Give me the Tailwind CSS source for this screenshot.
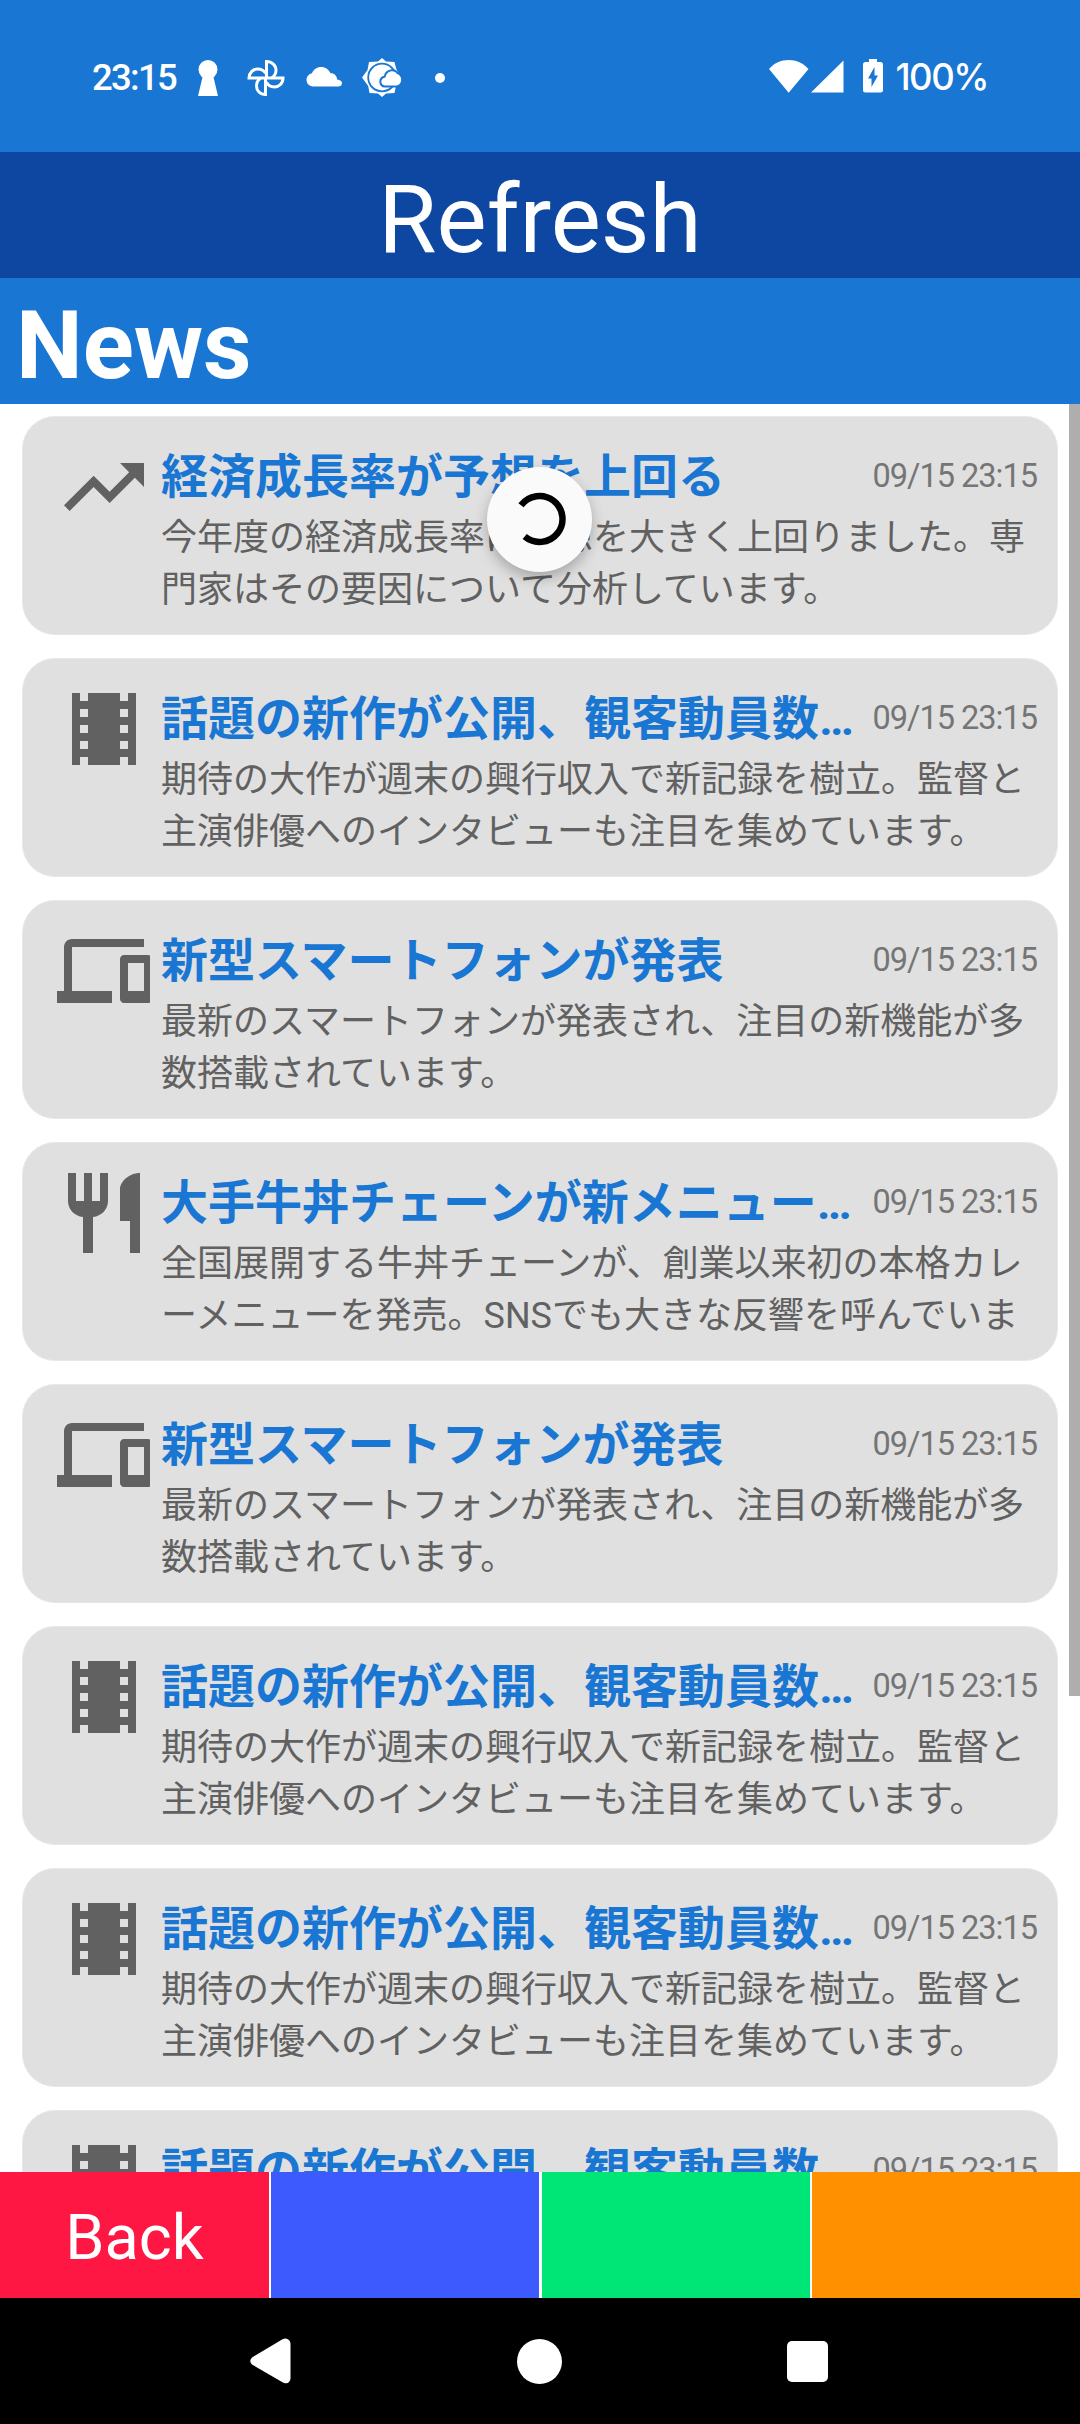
<!DOCTYPE html>
<html lang="ja">
<head>
<meta charset="utf-8">
<title>News</title>
<script src="https://cdn.jsdelivr.net/npm/@tailwindcss/browser@4"></script>
</head>
<body class="bg-white">
<div class="relative flex h-[2424px] w-[1080px] flex-col overflow-hidden font-['Roboto','Noto_Sans_CJK_JP',sans-serif]">

  <!-- Status bar -->
  <div class="flex h-[152px] shrink-0 items-start justify-between bg-[#1976d2] pt-[58px] pr-[92px] pl-[92px] text-white">
    <div class="flex h-10 items-center">
      <span class="w-[106px] text-[36.5px] leading-10 font-medium tracking-[-1.7px]">23:15</span>
      <svg class="h-10 w-5" viewBox="0 0 20 40" fill="currentColor"><circle cx="10" cy="11.500" r="9.500"/><path d="M5 17h10l5 21H0z"/></svg>
      <svg class="ml-[28px] h-10 w-10" viewBox="0 0 40 40" fill="none" stroke="currentColor" stroke-width="3"><path d="M20.500 20V3.500c5.500 0 9.500 4 9.500 8.800 0 3.500-2 6.200-4.500 7.700M20.500 20H37c0 5.500-4 9-8.500 9-4 0-7-2.500-8-5M19.500 20v16.500c-5.500 0-9-4-9-8.500 0-4 2-6.500 4.500-8M20.500 20H3c0-5 4-9 8.500-9 4 0 7 2 9 5"/></svg>
      <svg class="ml-5 h-10 w-9" viewBox="0 0 36 40" fill="currentColor"><path d="M7 28.500a6.700 6.700 0 0 1-1-13.300C7.500 11.500 11 9 15 9c4.500 0 8 2.500 9.500 6.300 3.500-.3 6.500 2.500 6.700 6.200 3 .3 4.800 1.700 4.800 3.700 0 2-1.500 3.300-4 3.300z"/></svg>
      <svg class="ml-5 h-10 w-10" viewBox="0 0 40 40" fill="currentColor"><path d="M20 0l4 3.500 8.500.5 1.500 6 4 9.500-4 8.500-1.500 7-8.500.5-4 3.500-4-3.500-8.500-.5-1.300-7L0 19.500 5.500 12 7 4l9-.5z"/><circle cx="20" cy="19.500" r="13.800" fill="none" stroke="#1976d2" stroke-width="1.800"/><path d="M23 27.500c-5 0-5-7.500.5-8 1-7 9-8 11.500-3.500 6 1.500 5.500 11.500-1.500 11.500z" stroke="#1976d2" stroke-width="4"/><path d="M23 27.500c-5 0-5-7.500.5-8 1-7 9-8 11.500-3.500 6 1.500 5.500 11.500-1.500 11.500z"/></svg>
      <span class="ml-[33px] size-2.5 rounded-full bg-white"></span>
    </div>
    <div class="flex h-10 items-center">
      <svg class="h-10 w-10" viewBox="0 0 40 40" fill="currentColor"><path d="M0 11C5 5 12 2 19.700 2S34 5 39.500 11L19.700 34.700z"/></svg>
      <svg class="ml-0.5 h-10 w-[33px]" viewBox="0 0 33 40" fill="currentColor"><path d="M32.500 2.500v32H0z"/></svg>
      <svg class="ml-[19px] h-10 w-5" viewBox="0 0 20 40"><path fill="currentColor" d="M6 1h8v3h3.500Q20 4 20 6.500v25.500q0 2.500-2.500 2.500h-15Q0 34.500 0 32V6.500Q0 4 2.500 4H6z"/><path fill="#1976d2" d="M11.500 9v8.500H15L8.500 29v-8.500H5z"/></svg>
      <span class="ml-3 -mt-0.5 text-right font-['Inter',sans-serif] text-[36.5px] leading-[36px] font-medium tracking-[-1.5px]">100%</span>
    </div>
  </div>

  <button class="flex h-[126px] shrink-0 items-center justify-center bg-[#0d47a1] pt-2.5 text-[94.5px] leading-[110px] text-white">Refresh</button>
  <h1 class="flex h-[126px] shrink-0 items-center bg-[#1976d2] pt-2.5 pl-4 text-[94.5px] leading-[110px] font-bold text-white">News</h1>

  <!-- News list -->
  <div class="relative min-h-0 flex-1 overflow-hidden bg-white">
    <ul id="list" class="flex flex-col gap-[23px] px-[22px] pt-3"></ul>
    <div class="absolute top-0 right-0 h-[1292px] w-[11px] bg-[#aeaeae]"></div>
    <div class="absolute top-[63px] left-[487px] size-[105px] rounded-full bg-[#fafafa] shadow-[0_6px_14px_rgba(0,0,0,0.26)]">
      <svg class="size-full" viewBox="-52.5 -52.5 105 105" fill="none" stroke="#000" stroke-width="6.500"><path d="M-18.500-14.200A23 23 0 1 1-14.800 17.100"/></svg>
    </div>
  </div>

  <!-- Colour buttons -->
  <div class="flex h-[126px] shrink-0 bg-white">
    <button class="flex w-[269px] items-center justify-center bg-[#ff1744] pt-1.5 text-[63px] text-white">Back</button>
    <button class="ml-0.5 w-[268px] bg-[#3d5afe]"></button>
    <button class="ml-[3px] w-[268px] bg-[#00e676]"></button>
    <button class="ml-0.5 w-[268px] bg-[#ff9100]"></button>
  </div>

  <!-- System navigation -->
  <div class="flex h-[126px] shrink-0 items-center justify-between bg-black px-[250px]">
    <svg class="h-[46px] w-[41px]" viewBox="0 0 41 46" fill="#fff"><path d="M32.500 1.300Q35 0 37.500 1 40.500 2.500 40.500 6v34q0 3.500-3 5-2.500 1-5-.7L2 26.500q-3.500-3.500 0-7z"/></svg>
    <span class="size-[45px] rounded-full bg-white"></span>
    <span class="mr-0.5 size-[41px] rounded-[5px] bg-white"></span>
  </div>
</div>

<script>
const icons = {
  trend: 'M16 6l2.290 2.290-4.880 4.880-4-4L2 16.590 3.410 18l6-6 4 4 6.300-6.290L22 12V6z',
  film: 'M18 3v2h-2V3H8v2H6V3H4v18h2v-2h2v2h8v-2h2v2h2V3h-2zM8 17H6v-2h2v2zm0-4H6v-2h2v2zm0-4H6V7h2v2zm10 8h-2v-2h2v2zm0-4h-2v-2h2v2zm0-4h-2V7h2v2z',
  devices: 'M4 6h18V4H4c-1.100 0-2 .9-2 2v11H0v3h14v-3H4V6zm19 2h-6c-.55 0-1 .45-1 1v10c0 .55.45 1 1 1h6c.55 0 1-.45 1-1V9c0-.55-.45-1-1-1zm-1 9h-4v-7h4v7z',
  food: 'M11 9H9V2H7v7H5V2H3v7c0 2.120 1.660 3.840 3.750 3.970V22h2.500v-9.030C11.340 12.840 13 11.120 13 9V2h-2v7zm5-3v8h2.500v8H21V2c-2.760 0-5 2.240-5 4z'
};
const economy = ['trend', '経済成長率が予想を上回る', '今年度の経済成長率は予想を大きく上回りました。専<br>門家はその要因について分析しています。'];
const movie = ['film', '話題の新作が公開、観客動員数…', '期待の大作が週末の興行収入で新記録を樹立。監督と<br>主演俳優へのインタビューも注目を集めています。'];
const phone = ['devices', '新型スマートフォンが発表', '最新のスマートフォンが発表され、注目の新機能が多<br>数搭載されています。'];
const gyudon = ['food', '大手牛丼チェーンが新メニュー…', '全国展開する牛丼チェーンが、創業以来初の本格カレ<br>ーメニューを発売。SNSでも大きな反響を呼んでいま'];
document.getElementById('list').innerHTML = [economy, movie, phone, gyudon, phone, movie, movie, movie].map(([icon, title, body]) => `
  <li class="flex h-[219px] shrink-0 rounded-[33px] border border-[#e8e8e8] bg-[#e0e0e0] pt-[22px] pr-5 pl-[34px]">
    <div class="flex w-[93px] shrink-0 justify-center overflow-hidden">
      <svg class="size-24 shrink-0" viewBox="0 0 24 24" fill="#616161"><path d="${icons[icon]}"/></svg>
    </div>
    <div class="ml-[11px] min-w-0 flex-1 pt-[3px]">
      <div class="flex h-[70px] items-center justify-between">
        <h2 class="text-[47px] leading-[70px] font-bold whitespace-nowrap text-[#1976d2]">${title}</h2>
        <time class="-mt-0.5 text-[32.5px] leading-[40px] tracking-[-1px] whitespace-nowrap text-[#757575]">09/15 23:15</time>
      </div>
      <p class="text-[36px] leading-[52px] whitespace-nowrap text-[#616161]">${body}</p>
    </div>
  </li>`).join('');
</script>
</body>
</html>
